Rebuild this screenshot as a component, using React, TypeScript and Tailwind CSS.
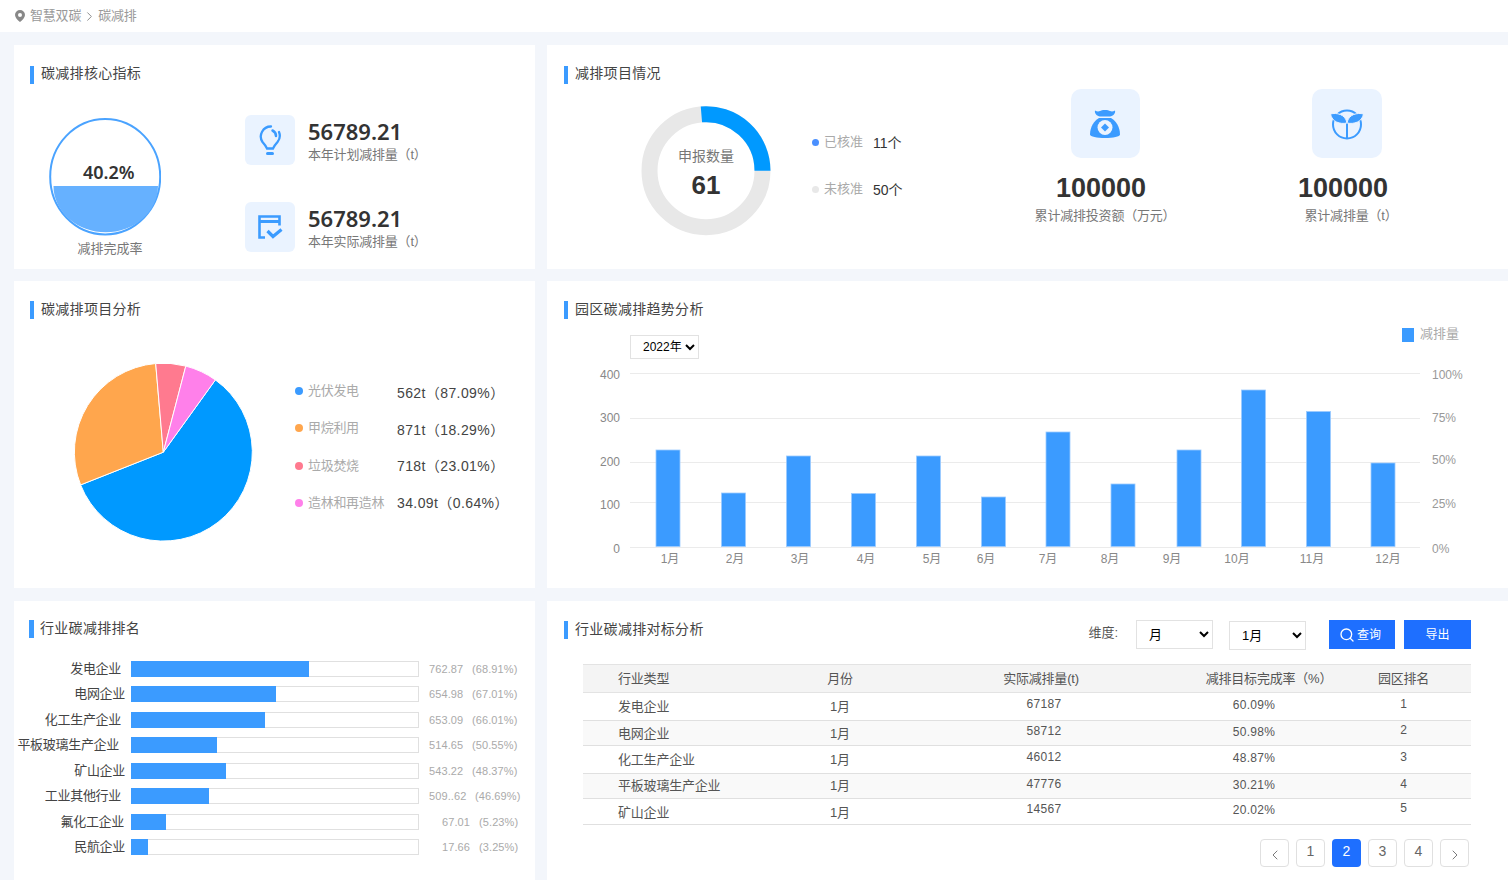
import React from 'react';
import { ChevronLeft, ChevronRight, Search } from 'lucide-react';

const FONT = '"Liberation Sans","Noto Sans CJK SC",sans-serif';

const Title: React.FC<{ children: React.ReactNode; barClass?: string; textClass?: string }> = ({
  children,
  barClass = 'w-[4px]',
  textClass = 'ml-[7px] -mt-[4px]',
}) => (
  <div className="flex h-[18px] items-center">
    <span className={`h-[18px] bg-[#3b9bff] ${barClass}`} />
    <span className={`text-[14px] leading-[14px] tracking-[0.3px] text-[#444] ${textClass}`}>{children}</span>
  </div>
);

const Bulb = () => (
  <svg width="24" height="32" viewBox="0 0 24 32" fill="none" stroke="#3b9bff" strokeLinecap="round">
    <path d="M13 2.500A10 10 0 0 0 4.500 18c1.800 2 3 3.500 4.500 6.500h6c1.500-3 2.700-4.500 4.500-6.500A10 10 0 0 0 21 8" strokeWidth="2.300" />
    <path d="M14.500 6.500a6 6 0 0 1 3.500 5.500" strokeWidth="2.500" />
    <path d="M9.500 29.500h5" strokeWidth="3" />
  </svg>
);

const CheckDoc = () => (
  <svg width="25" height="24" viewBox="0 0 25 24" fill="none" stroke="#3b9bff">
    <path d="M7 22.500H1.500V1.500h20v9" strokeWidth="2.600" />
    <path d="M1.500 6.500h20" strokeWidth="3" />
    <path d="M9.500 16l5.500 5.500 8.500-7" strokeWidth="3.200" />
  </svg>
);

const MoneyBag = () => (
  <svg width="32" height="32" viewBox="0 0 32 32">
    <path d="M6 2.500c2 1.200 3.500 1.200 5 .5 1.500-1.500 8.500-1.500 10 0 1.500.7 3 .7 5-.5.800 3-2 5.500-5 6h-10c-3-.5-5.800-3-5-6z" fill="#3b9bff" />
    <path d="M10 10h12c5 3 9 9 9 16.500 0 2-7 3.500-15 3.500S1 28.500 1 26.500C1 19 5 13 10 10z" fill="#3b9bff" />
    <circle cx="16" cy="19.500" r="7.500" fill="#eaf3ff" />
    <path d="M16 15.500l4 4-4 4-4-4z" fill="#3b9bff" />
  </svg>
);

const Sprout = () => (
  <svg width="34" height="32" viewBox="0 0 34 32" fill="none">
    <circle cx="17" cy="16.500" r="14" stroke="#3b9bff" strokeWidth="2" />
    <path d="M17 14v17" stroke="#3b9bff" strokeWidth="2" />
    <path d="M0.500 6c6-1.500 15 0 16.500 9-7 1.500-15-1-16.500-9z" fill="#3b9bff" stroke="#eaf3ff" strokeWidth="1" />
    <path d="M33.500 6c-6-1.500-15 0-16.500 9 7 1.500 15-1 16.500-9z" fill="#3b9bff" stroke="#eaf3ff" strokeWidth="1" />
  </svg>
);

const Pin = () => (
  <svg width="10" height="12" viewBox="0 0 10 12">
    <path fillRule="evenodd" d="M5 0a5 5 0 0 1 5 5c0 2.500-2.500 5-5 7-2.500-2-5-4.500-5-7a5 5 0 0 1 5-5zm0 3a2 2 0 1 0 0 4 2 2 0 0 0 0-4z" fill="#888" />
  </svg>
);

const Metric: React.FC<{ icon: React.ReactNode; label: string }> = ({ icon, label }) => (
  <div className="flex items-start">
    <div className="flex h-[50px] w-[50px] items-center justify-center rounded-[6px] bg-[#eaf3ff]">{icon}</div>
    <div className="ml-[13px] mt-[2px]">
      <div className="text-[22px] font-semibold leading-[28px] text-[#333] font-['Noto_Sans']">56789.21</div>
      <div className="mt-[2px] whitespace-pre text-[13px] leading-[16px] tracking-[-0.2px] text-[#777]">{label}</div>
    </div>
  </div>
);

const CoreCard = () => (
  <div className="h-[224px] bg-white pl-[16px] pt-[21px]">
    <Title>碳减排核心指标</Title>
    <div className="mt-[31px] flex items-start">
      <div className="ml-[19px] mt-[3px] flex w-[112px] flex-col items-center">
        <div className="relative h-[118px] w-[112px]">
          <svg width="112" height="118" viewBox="49 118 112 118" fill="none">
            <ellipse cx="105.200" cy="176.700" rx="55" ry="57.700" stroke="#4aa3ff" strokeWidth="2" />
            <path d="M53.500 186H158a52 46 0 0 1-104.500 0z" fill="#66b1ff" />
          </svg>
          <span className="absolute left-[34px] top-[41px] text-[18px] font-semibold leading-[26px] text-[#333] font-['Noto_Sans']">40.2%</span>
        </div>
        <span className="ml-[10px] mt-[4px] whitespace-nowrap text-[13px] leading-[18px] text-[#777]">减排完成率</span>
      </div>
      <div className="ml-[84px] flex flex-col gap-[37px]">
        <Metric icon={<Bulb />} label="本年计划减排量（t）" />
        <Metric icon={<CheckDoc />} label="本年实际减排量（t）" />
      </div>
    </div>
  </div>
);

const Stat: React.FC<{ icon: React.ReactNode; label: string; labelClass: string; boxClass: string }> = ({ icon, label, labelClass, boxClass }) => (
  <div className="flex w-[200px] flex-col items-center">
    <div className={`ml-[8px] flex h-[69px] items-center justify-center rounded-[10px] bg-[#eaf3ff] ${boxClass}`}>{icon}</div>
    <div className="mt-[13px] text-[27px] font-bold leading-[34px] text-[#333]">100000</div>
    <div className={`mt-[1px] whitespace-nowrap text-[13px] leading-[20px] tracking-[-0.2px] text-[#777] ${labelClass}`}>{label}</div>
  </div>
);

const ProjectCard = () => (
  <div className="h-[224px] bg-white pl-[17px] pt-[21px]">
    <Title>减排项目情况</Title>
    <div className="mt-[5px] flex items-start">
      <div className="relative ml-[77px] mt-[17px] h-[130px] w-[130px]">
        <svg width="130" height="130" viewBox="641 106 130 130" fill="none">
          <circle cx="706" cy="170.700" r="56.500" stroke="#e8e8e8" strokeWidth="16" />
          <path d="M701.400 114.400A56.500 56.500 0 0 1 762.500 170.700" stroke="#0099ff" strokeWidth="16" />
        </svg>
        <div className="absolute inset-0 flex flex-col items-center pt-[40px]">
          <span className="text-[14px] leading-[20px] text-[#777]">申报数量</span>
          <span className="mt-[3px] text-[26px] font-bold leading-[32px] text-[#333]">61</span>
        </div>
      </div>
      <div className="ml-[41px] mt-[43px] flex w-[100px] flex-col gap-[27px]">
        <div className="flex h-[20px] items-center">
          <span className="h-[7px] w-[7px] rounded-full bg-[#4a90ff]" />
          <span className="ml-[5px] text-[13px] leading-[16px] text-[#aaa]">已核准</span>
          <span className="ml-[10px] mt-[2px] text-[14px] leading-[16px] text-[#333]">11个</span>
        </div>
        <div className="flex h-[20px] items-center">
          <span className="h-[7px] w-[7px] rounded-full bg-[#e8e8e8]" />
          <span className="ml-[5px] text-[13px] leading-[16px] text-[#aaa]">未核准</span>
          <span className="ml-[10px] mt-[2px] text-[14px] leading-[16px] text-[#333]">50个</span>
        </div>
      </div>
      <div className="ml-[89px]">
        <Stat icon={<MoneyBag />} label="累计减排投资额（万元）" labelClass="ml-[8px]" boxClass="w-[69px]" />
      </div>
      <div className="ml-[42px]">
        <Stat icon={<Sprout />} label="累计减排量（t）" labelClass="ml-[16px]" boxClass="w-[70px]" />
      </div>
    </div>
  </div>
);

const pieLegend = [
  { name: '光伏发电', dot: 'bg-[#3b9bff]', value: '562t（87.09%）', pad: 'pt-[5px]' },
  { name: '甲烷利用', dot: 'bg-[#ffa64d]', value: '871t（18.29%）', pad: 'pt-[4px]' },
  { name: '垃圾焚烧', dot: 'bg-[#ff7a8f]', value: '718t（23.01%）', pad: 'pt-[1px]' },
  { name: '造林和再造林', dot: 'bg-[#ff80ea]', value: '34.09t（0.64%）', pad: 'pt-0' },
];

const PieCard = () => (
  <div className="h-[307px] bg-white pl-[16px] pt-[20px]">
    <Title textClass="ml-[7px] -mt-[2px]">碳减排项目分析</Title>
    <div className="ml-[44px] mt-[43px] flex items-start">
      <svg width="180" height="181" viewBox="74 361.500 180 181" stroke="#fff" strokeWidth="1" strokeLinejoin="round">
        <path d="M163.300 451.700L215.400 379.400A89 89 0 1 1 80.600 484.400z" fill="#0099ff" />
        <path d="M163.300 451.700L80.600 484.400A89 89 0 0 1 155.700 363z" fill="#ffa64d" />
        <path d="M163.300 451.700L155.700 363A89 89 0 0 1 185.800 365.600z" fill="#ff7a8f" />
        <path d="M163.300 451.700L185.800 365.600A89 89 0 0 1 215.400 379.400z" fill="#ff80ea" />
      </svg>
      <div className="ml-[41px] mt-[10px] flex flex-col">
        {pieLegend.map((l) => (
          <div key={l.name} className="flex h-[37.500px] items-center">
            <span className={`h-[8px] w-[8px] rounded-full ${l.dot}`} />
            <span className="ml-[5px] w-[89px] whitespace-nowrap text-[13px] leading-[16px] tracking-[-0.3px] text-[#aaa]">{l.name}</span>
            <span className={`whitespace-nowrap text-[14px] leading-[16px] tracking-[0.4px] text-[#444] ${l.pad}`}>{l.value}</span>
          </div>
        ))}
      </div>
    </div>
  </div>
);

const bars = [
  { m: '1月', x: 656, top: 450, lx: 670 },
  { m: '2月', x: 721.5, top: 493, lx: 735 },
  { m: '3月', x: 786.5, top: 456, lx: 800 },
  { m: '4月', x: 851.5, top: 493.5, lx: 866 },
  { m: '5月', x: 916.5, top: 456, lx: 932 },
  { m: '6月', x: 981.5, top: 497, lx: 986 },
  { m: '7月', x: 1046, top: 432, lx: 1048 },
  { m: '8月', x: 1111, top: 484, lx: 1110 },
  { m: '9月', x: 1177, top: 450, lx: 1172 },
  { m: '10月', x: 1241.5, top: 390, lx: 1237 },
  { m: '11月', x: 1306.5, top: 411.5, lx: 1312 },
  { m: '12月', x: 1371, top: 463, lx: 1388 },
];

const grid = [
  { y: 373.5, l: '400', r: '100%', ly: 375, ry: 375 },
  { y: 418.5, l: '300', r: '75%', ly: 418, ry: 418 },
  { y: 462.5, l: '200', r: '50%', ly: 462, ry: 460 },
  { y: 502.5, l: '100', r: '25%', ly: 505, ry: 504 },
  { y: 547.5, l: '0', r: '0%', ly: 549, ry: 549 },
];

const TrendCard = () => (
  <div className="h-[307px] bg-white pl-[17px] pr-[49px] pt-[20px]">
    <Title textClass="ml-[7px] -mt-[2px]">园区碳减排趋势分析</Title>
    <div className="mt-[9px] flex h-[32px] items-start justify-between">
      <select className="ml-[66px] mt-[7px] h-[24px] w-[69px] border border-[#e2e2e2] bg-white pl-[8px] text-[12px] text-black" defaultValue="2022年">
        <option>2022年</option>
      </select>
      <div className="flex items-center">
        <span className="h-[14px] w-[12px] bg-[#3b9bff]" />
        <span className="ml-[6px] -mt-[3px] text-[13px] leading-[16px] text-[#aaa]">减排量</span>
      </div>
    </div>
    <svg className="-ml-[17px]" width="961" height="212" viewBox="547 360 961 212" fontSize="12" fill="#888">
      {grid.map((g) => (
        <g key={g.l}>
          <line x1="630" x2="1420" y1={g.y} y2={g.y} stroke="#ebebeb" />
          <text x="620" y={g.ly + 4} textAnchor="end">{g.l}</text>
          <text x="1432" y={g.ry + 4} fill="#999">{g.r}</text>
        </g>
      ))}
      {bars.map((b) => (
        <g key={b.m}>
          <rect x={b.x} y={b.top} width="24" height={546.5 - b.top} fill="#3b9bff" stroke="#9ccbff" strokeWidth="0.8" />
          <text x={b.lx} y="563" textAnchor="middle">{b.m}</text>
        </g>
      ))}
    </svg>
  </div>
);

const ranks = [
  { n: '发电企业', fill: 178, pr: 'pr-[10px]', v: '762.87', p: '(68.91%)', vc: 'ml-[10px] w-[43px]' },
  { n: '电网企业', fill: 145, pr: 'pr-[6px]', v: '654.98', p: '(67.01%)', vc: 'ml-[10px] w-[43px]' },
  { n: '化工生产企业', fill: 134, pr: 'pr-[10px]', v: '653.09', p: '(66.01%)', vc: 'ml-[10px] w-[43px]' },
  { n: '平板玻璃生产企业', fill: 86, pr: 'pr-[12px]', v: '514.65', p: '(50.55%)', vc: 'ml-[10px] w-[43px]' },
  { n: '矿山企业', fill: 95, pr: 'pr-[6px]', v: '543.22', p: '(48.37%)', vc: 'ml-[10px] w-[43px]' },
  { n: '工业其他行业', fill: 78, pr: 'pr-[10px]', v: '509..62', p: '(46.69%)', vc: 'ml-[10px] w-[46px]' },
  { n: '氟化工企业', fill: 35, pr: 'pr-[7px]', v: '67.01', p: '(5.23%)', vc: 'ml-[23px] w-[37px]' },
  { n: '民航企业', fill: 17, pr: 'pr-[6px]', v: '17.66', p: '(3.25%)', vc: 'ml-[23px] w-[37px]' },
];

const RankCard = () => (
  <div className="h-[279px] bg-white pl-[15px] pt-[19px]">
    <Title barClass="w-[5px]" textClass="ml-[6px] -mt-[2px]">行业碳减排排名</Title>
    <div className="-ml-[15px] mt-[18px] flex flex-col">
      {ranks.map((r) => (
        <div key={r.n} className="flex h-[25.500px] items-center">
          <div className={`w-[117px] whitespace-nowrap text-right text-[13px] leading-[16px] tracking-[-0.3px] text-[#444] ${r.pr}`}>{r.n}</div>
          <div className="h-[16px] w-[288px] border border-[#e0e0e0]">
            <div className="-m-px h-[16px] bg-[#3b9bff]" style={{ width: r.fill }} />
          </div>
          <span className={`whitespace-nowrap text-[11px] tracking-[0.1px] text-[#aaa] ${r.vc}`}>{r.v}</span>
          <span className="whitespace-nowrap text-[11px] tracking-[0.1px] text-[#aaa]">{r.p}</span>
        </div>
      ))}
    </div>
  </div>
);

const rows = [
  { n: '发电企业', h: 'h-[28px]', bg: 'bg-white', a: '67187', b: '60.09%', c: '1', nc: '', rc: 'pb-[5px]' },
  { n: '电网企业', h: 'h-[25px]', bg: 'bg-[#f9f9f9]', a: '58712', b: '50.98%', c: '2', nc: 'pt-[2px]', rc: 'pb-[6px]' },
  { n: '化工生产企业', h: 'h-[28px]', bg: 'bg-white', a: '46012', b: '48.87%', c: '3', nc: '', rc: 'pb-[5px]' },
  { n: '平板玻璃生产企业', h: 'h-[25px]', bg: 'bg-[#f9f9f9]', a: '47776', b: '30.21%', c: '4', nc: '', rc: 'pb-[5px]' },
  { n: '矿山企业', h: 'h-[26px]', bg: 'bg-white', a: '14567', b: '20.02%', c: '5', nc: 'pt-[3px]', rc: 'pb-[7px]' },
];

const COLS = 'grid grid-cols-[187px_140px_262px_164px_135px] items-center';

const TableCard = () => (
  <div className="h-[279px] bg-white pl-[17px] pr-[37px] pt-[19px]">
    <div className="flex h-[44px] items-start">
      <div className="mt-[1px]">
        <Title textClass="ml-[7px] -mt-[2px]">行业碳减排对标分析</Title>
      </div>
      <div className="ml-auto flex items-start">
        <span className="mr-[18px] mt-[4px] text-[13px] leading-[18px] text-[#555]">维度:</span>
        <select className="h-[29px] w-[77px] border border-[#e2e2e2] bg-white pl-[8px] text-[13px] text-black" defaultValue="月">
          <option>月</option>
        </select>
        <select className="ml-[16px] mt-px h-[29px] w-[77px] border border-[#e2e2e2] bg-white pl-[8px] text-[13px] text-black" defaultValue="1月">
          <option>1月</option>
        </select>
        <button className="ml-[23px] flex h-[29px] w-[66px] items-center justify-center gap-[2px] bg-[#1e6fff] pr-[4px] text-[12px] text-white">
          <Search size={16} />
          查询
        </button>
        <button className="ml-[9px] h-[29px] w-[67px] bg-[#1e6fff] text-[12px] text-white">导出</button>
      </div>
    </div>
    <div className="ml-[19px] w-[888px] text-[13px] tracking-[-0.2px] text-[#555]">
      <div className={`${COLS} h-[29px] border-y border-[#e3e3e3] bg-[#f4f4f4]`}>
        <span className="pl-[35px]">行业类型</span>
        <span className="text-center">月份</span>
        <span className="text-center">实际减排量(t)</span>
        <span className="pl-[30px] text-center">减排目标完成率（%）</span>
        <span className="text-center">园区排名</span>
      </div>
      {rows.map((r) => (
        <div key={r.n} className={`${COLS} border-b border-[#e0e0e0] ${r.h} ${r.bg}`}>
          <span className={`pl-[35px] ${r.nc}`}>{r.n}</span>
          <span className={`text-center ${r.nc}`}>1月</span>
          <span className="pb-[5px] pl-[6px] text-center text-[12px] tracking-[0.3px]">{r.a}</span>
          <span className="pb-[3px] text-center text-[12px] tracking-[0.3px]">{r.b}</span>
          <span className={`text-center text-[12px] ${r.rc}`}>{r.c}</span>
        </div>
      ))}
    </div>
    <div className="mr-[2px] mt-[14px] flex justify-end gap-[7px]">
      <PageBtn><ChevronLeft size={16} strokeWidth={1.300} className="mt-[6px]" /></PageBtn>
      <PageBtn>1</PageBtn>
      <PageBtn active>2</PageBtn>
      <PageBtn>3</PageBtn>
      <PageBtn>4</PageBtn>
      <PageBtn><ChevronRight size={16} strokeWidth={1.300} className="mt-[6px]" /></PageBtn>
    </div>
  </div>
);

function PageBtn({ children, active }: { children: React.ReactNode; active?: boolean }) {
  return (
    <div
      className={
        active
          ? 'flex h-[28px] w-[29px] items-center justify-center rounded-[4px] bg-[#1e6fff] pb-[3px] text-[14px] text-white'
          : 'flex h-[28px] w-[29px] items-center justify-center rounded-[4px] border border-[#e0e0e0] pb-[3px] text-[14px] text-[#666]'
      }
    >
      {children}
    </div>
  );
}

export default function App() {
  return (
    <div className="h-[880px] overflow-hidden bg-[#f3f6fb]" style={{ fontFamily: FONT }}>
      <div className="flex h-[32px] items-center bg-white pl-[15px] text-[13px] tracking-[-0.2px] text-[#999]">
        <Pin />
        <span className="ml-[5px]">智慧双碳</span>
        <ChevronRight size={15} strokeWidth={1.500} className="ml-[1px] mt-[1px] text-[#888]" />
        <span className="ml-[1px]">碳减排</span>
      </div>
      <div className="grid grid-cols-[521px_961px] gap-x-[12px] pl-[14px] pt-[13px]">
        <CoreCard />
        <ProjectCard />
        <div className="col-span-2 h-[12px]" />
        <PieCard />
        <TrendCard />
        <div className="col-span-2 h-[13px]" />
        <RankCard />
        <TableCard />
      </div>
    </div>
  );
}
